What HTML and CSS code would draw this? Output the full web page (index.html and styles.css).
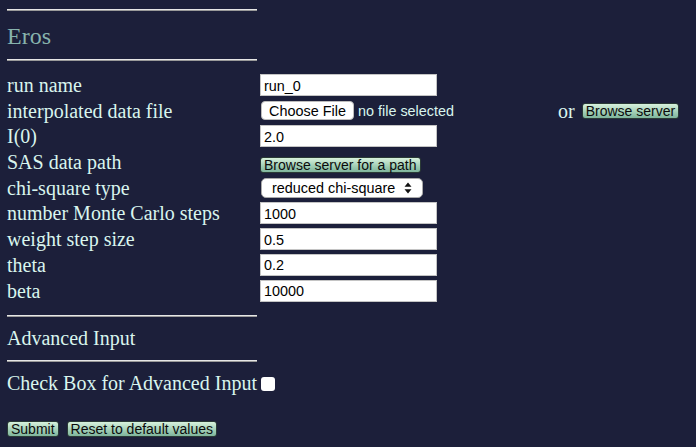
FILE: index.html
```html
<!DOCTYPE html>
<html>
<head>
<meta charset="utf-8">
<title>Eros</title>
<link rel="stylesheet" href="styles.css">
</head>
<body>
<div class="page">
  <hr class="rule">
  <h1 class="title">Eros</h1>
  <hr class="rule">
  <form class="form">
    <div class="grid">
      <label class="lbl">run name</label>
      <div class="cell"><input class="txt" type="text" value="run_0"></div>

      <label class="lbl">interpolated data file</label>
      <div class="cell">
        <div class="filewrap">
          <span class="filebtn">Choose File</span>
          <span class="nofile">no file selected</span>
        </div>
        <span class="or">or</span>
        <button type="button" class="gbtn">Browse server</button>
      </div>

      <label class="lbl">I(0)</label>
      <div class="cell"><input class="txt" type="text" value="2.0"></div>

      <label class="lbl">SAS data path</label>
      <div class="cell cell-low"><button type="button" class="gbtn">Browse server for a path</button></div>

      <label class="lbl">chi-square type</label>
      <div class="cell">
        <div class="select">
          <span class="seltext">reduced chi-square</span>
          <svg class="arrows" width="8" height="12" viewBox="0 0 8 12"><path d="M4 0.5 L7.5 4.8 L0.5 4.8 Z M4 11.5 L7.5 7.2 L0.5 7.2 Z" fill="#111"/></svg>
        </div>
      </div>

      <label class="lbl">number Monte Carlo steps</label>
      <div class="cell"><input class="txt" type="text" value="1000"></div>

      <label class="lbl">weight step size</label>
      <div class="cell"><input class="txt" type="text" value="0.5"></div>

      <label class="lbl">theta</label>
      <div class="cell"><input class="txt" type="text" value="0.2"></div>

      <label class="lbl">beta</label>
      <div class="cell"><input class="txt" type="text" value="10000"></div>
    </div>
    <hr class="rule rule-a">
    <div class="section">Advanced Input</div>
    <hr class="rule">
    <div class="check">Check Box for Advanced Input <span class="box"></span></div>
    <div class="actions">
      <button type="button" class="gbtn">Submit</button>
      <button type="button" class="gbtn">Reset to default values</button>
    </div>
  </form>
</div>
</body>
</html>
```

FILE: styles.css
```css
html, body {
  margin: 0;
  padding: 0;
  background: #1c1f3a;
}
body {
  width: 696px;
  height: 447px;
  overflow: hidden;
  font-family: "Liberation Serif", "Times New Roman", serif;
  color: #d9f5ee;
}
.page {
  padding: 9px 7px 0 7px;
}
.rule {
  width: 250px;
  height: 0;
  margin: 0;
  border: 0;
  border-top: 1px solid #e6e6e6;
  border-bottom: 1px solid #9a9a9a;
}
.title {
  margin: 11px 0 9px 0;
  font-weight: normal;
  font-size: 24px;
  line-height: 28px;
  color: #87b3ad;
}
.form {
  margin: 13px 0 0 0;
}
.grid {
  display: grid;
  grid-template-columns: 253px 1fr;
  grid-auto-rows: 22px;
  row-gap: 3.7px;
}
.lbl {
  font-size: 20px;
  line-height: 22px;
  white-space: nowrap;
}
.cell {
  display: flex;
  align-items: center;
  font-family: "Liberation Sans", Arial, sans-serif;
  font-size: 14.4px;
}
.cell-low {
  align-items: flex-end;
}
.txt {
  box-sizing: border-box;
  width: 177px;
  height: 22px;
  margin: 0;
  padding: 1px 3px 0 3px;
  border: 1px solid #c4c4c4;
  background: #fff;
  font-family: "Liberation Sans", Arial, sans-serif;
  font-size: 14.4px;
  color: #000;
  outline: none;
}
.filewrap {
  width: 298px;
  display: flex;
  align-items: center;
}
.filebtn {
  box-sizing: border-box;
  margin-left: 1px;
  width: 93px;
  height: 19px;
  display: flex;
  align-items: center;
  justify-content: center;
  background: #fff;
  border: 1px solid #bdbdbd;
  border-radius: 4px;
  color: #000;
  font-size: 14.4px;
}
.nofile {
  margin-left: 4px;
  color: #d9f5ee;
}
.or {
  font-family: "Liberation Serif", "Times New Roman", serif;
  font-size: 20px;
  line-height: 22px;
  margin-right: 7px;
}
.gbtn {
  box-sizing: border-box;
  height: 16px;
  margin: 0;
  padding: 0 3px;
  border: 1px solid #2a3a36;
  border-radius: 3px;
  background: linear-gradient(#d7f1dc, #9fcdb4 60%, #7fb59c);
  color: #0b0b0b;
  font-family: "Liberation Sans", Arial, sans-serif;
  font-size: 14px;
  line-height: 14px;
  white-space: nowrap;
}
.select {
  box-sizing: border-box;
  margin-left: 1px;
  width: 162px;
  height: 20px;
  display: flex;
  align-items: center;
  justify-content: space-between;
  padding: 0 10px 0 10px;
  background: #fff;
  border: 1px solid #aaa;
  border-radius: 5px;
  color: #000;
  font-size: 14.4px;
}
.arrows {
  display: block;
}
.rule-a {
  margin-top: 13px;
}
.section {
  margin: 10px 0 11px 0;
  font-size: 20px;
  line-height: 22px;
}
.check {
  margin-top: 10px;
  font-size: 20px;
  line-height: 22px;
  display: flex;
  align-items: center;
  white-space: nowrap;
}
.box {
  display: inline-block;
  width: 14px;
  height: 14px;
  margin-left: 4px;
  margin-top: 2px;
  background: #fff;
  border-radius: 3px;
}
.actions {
  margin-top: 27px;
  display: flex;
  gap: 8px;
}
```
